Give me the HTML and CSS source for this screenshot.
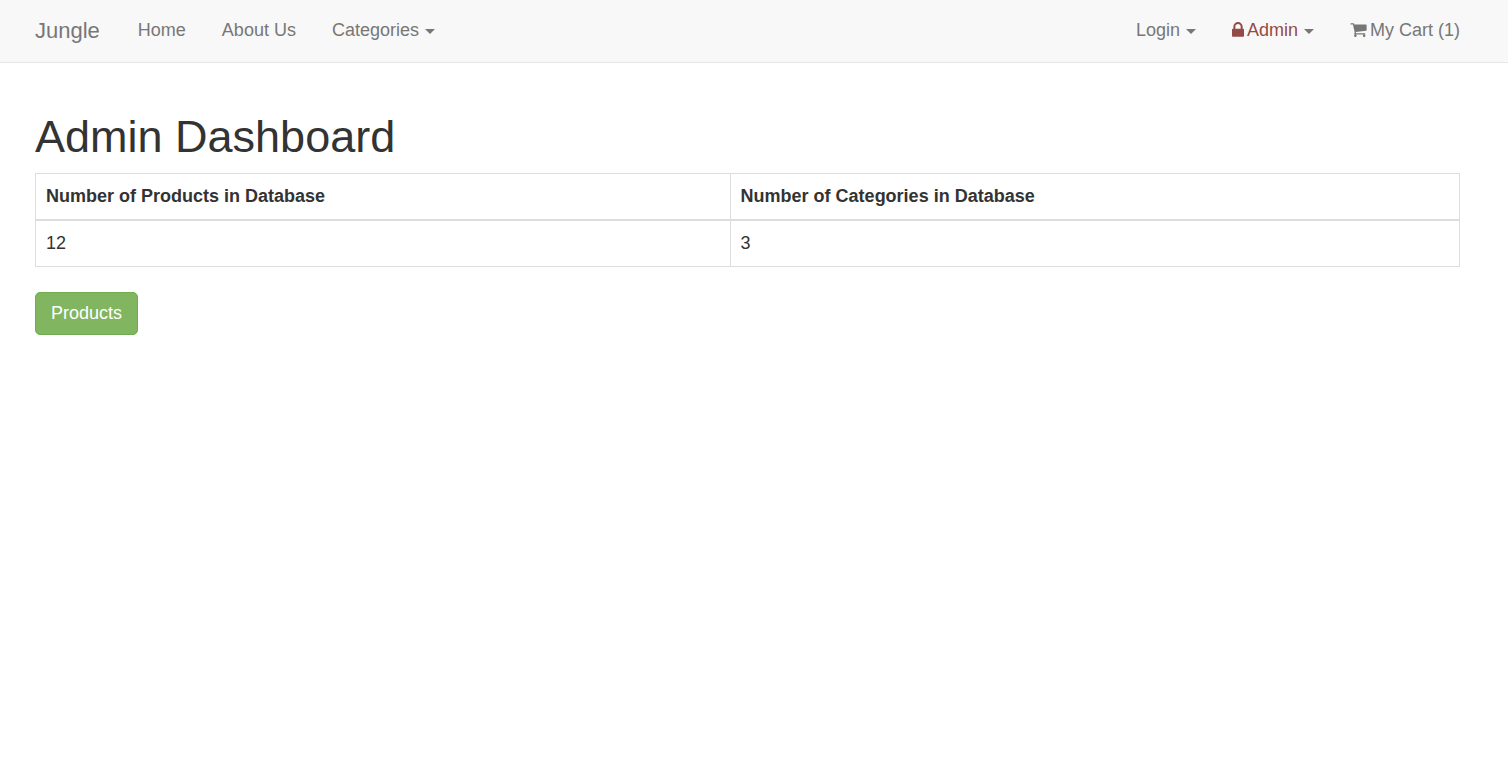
FILE: index.html
```html
<!DOCTYPE html>
<html lang="en">
<head>
<meta charset="utf-8">
<title>Jungle</title>
<link rel="stylesheet" href="styles.css">
</head>
<body>
<header class="navbar">
  <a class="brand" href="#">Jungle</a>
  <nav class="nav">
    <a class="nav-link" href="#">Home</a>
    <a class="nav-link" href="#">About Us</a>
    <a class="nav-link" href="#">Categories<span class="caret"></span></a>
  </nav>
  <nav class="nav nav-right" aria-label="Account">
    <a class="nav-link" href="#">Login<span class="caret"></span></a>
    <a class="nav-link" href="#"><span class="admin"><svg class="icon-lock" viewBox="0 0 1152 1536" aria-hidden="true"><path d="M320 640h512V448q0-106-75-181t-181-75-181 75-75 181zM1152 736v576q0 40-28 68t-68 28H96q-40 0-68-28t-28-68V736q0-40 28-68t68-28h32V448q0-184 132-316T576 0t316 132 132 316v192h32q40 0 68 28t28 68z"/></svg>Admin</span><span class="caret"></span></a>
    <a class="nav-link" href="#"><svg class="icon-cart" viewBox="0 0 1664 1536" aria-hidden="true"><path d="M640 1408q0 52-38 90t-90 38-90-38-38-90 38-90 90-38 90 38 38 90zM1536 1408q0 52-38 90t-90 38-90-38-38-90 38-90 90-38 90 38 38 90zM1664 320v512q0 24-16 42t-41 21L563 1017q1 7 5 21t6 25 2 26q0 16-24 64h920q26 0 45 19t19 45-19 45-45 19H448q-26 0-45-19t-19-45q0-14 11-39t29-59 20-38L267 256H64q-26 0-45-19T0 192t19-45 45-19h256q16 0 28 6t20 15 13 25 8 26 5 29 5 27h1201q26 0 45 19t19 45z"/></svg>My Cart (1)</a>
  </nav>
</header>
<main class="content">
  <h1 class="title">Admin Dashboard</h1>
  <table class="stats">
    <thead>
      <tr><th scope="col">Number of Products in Database</th><th scope="col">Number of Categories in Database</th></tr>
    </thead>
    <tbody>
      <tr><td>12</td><td>3</td></tr>
    </tbody>
  </table>
  <a class="button" href="#">Products</a>
</main>
</body>
</html>
```
FILE: styles.css
```css
* {
  box-sizing: border-box;
}

body {
  margin: 0;
  background: #fff;
  color: #333;
  font: 18px/25px "Liberation Sans", Arial, sans-serif;
}

a {
  text-decoration: none;
}

.navbar {
  display: flex;
  align-items: center;
  padding: 18px 48px 19px 35px;
  background: #f8f8f8;
  border-bottom: 1px solid #e7e7e7;
}

.brand {
  margin-right: 38px;
  color: #777;
  font-size: 22px;
}

.nav {
  display: flex;
  gap: 36px;
}

.nav-right {
  margin-left: auto;
}

.nav-link {
  color: #777;
}

.admin {
  color: #944a45;
}

.caret {
  display: inline-block;
  margin-left: 6px;
  vertical-align: middle;
  border-top: 5px solid #777;
  border-right: 5px solid transparent;
  border-left: 5px solid transparent;
}

.icon-lock {
  width: 12px;
  height: 16px;
  margin-right: 3px;
  vertical-align: -2px;
  fill: currentColor;
}

.icon-cart {
  width: 17px;
  height: 15px;
  margin-right: 3px;
  vertical-align: -1px;
  fill: currentColor;
}

.content {
  padding: 49px 48px 48px 35px;
}

.title {
  margin: 0 0 11px;
  font-size: 45px;
  font-weight: 400;
  line-height: 50px;
}

.stats {
  width: 100%;
  margin-bottom: 25px;
  border-collapse: collapse;
  border: 1px solid #ddd;
}

.stats th,
.stats td {
  padding: 10px;
  border: 1px solid #ddd;
  text-align: left;
}

.stats th {
  border-bottom-width: 2px;
}

.button {
  display: inline-block;
  padding: 8px 15px;
  border: 1px solid #70ab4f;
  border-radius: 5px;
  background: #82b560;
  color: #fff;
}
```
